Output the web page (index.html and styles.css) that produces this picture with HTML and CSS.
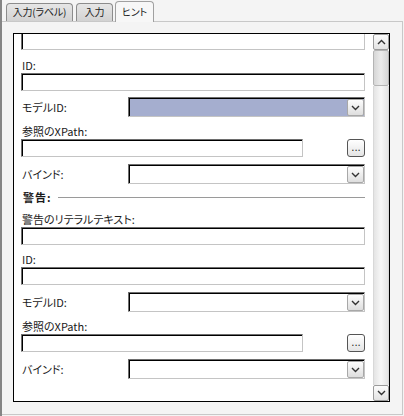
FILE: index.html
```html
<!DOCTYPE html>
<html lang="ja">
<head><meta charset="utf-8"><title>hint</title>
<link rel="stylesheet" href="styles.css">
</head>
<body>
<div class="win">
 <div class="tabs">
  <div class="tab t1">入力(ラベル)</div>
  <div class="tab t2">入力</div>
  <div class="tab t3 on">ヒント</div>
 </div>
 <div class="panel">
  <div class="box">
   <div class="content">
    <div class="txt cut"></div>

    <div class="field first"><div class="lbl">ID:</div><div class="txt"></div></div>
    <div class="row"><span class="lbl">モデルID:</span><div class="sel hi"><span class="drop"><svg width="9" height="6" viewBox="0 0 9 6"><polyline points="1,1 4.5,4.5 8,1"/></svg></span></div></div>
    <div class="field"><div class="lbl">参照のXPath:</div>
     <div class="pathrow"><div class="txt path"></div><button class="more">...</button></div></div>
    <div class="row"><span class="lbl">バインド:</span><div class="sel"><span class="drop"><svg width="9" height="6" viewBox="0 0 9 6"><polyline points="1,1 4.5,4.5 8,1"/></svg></span></div></div>

    <div class="heading"><b>警告:</b><span class="rule"></span></div>

    <div class="field lit"><div class="lbl">警告のリテラルテキスト:</div><div class="txt"></div></div>
    <div class="field"><div class="lbl">ID:</div><div class="txt"></div></div>
    <div class="row"><span class="lbl">モデルID:</span><div class="sel"><span class="drop"><svg width="9" height="6" viewBox="0 0 9 6"><polyline points="1,1 4.5,4.5 8,1"/></svg></span></div></div>
    <div class="field"><div class="lbl">参照のXPath:</div>
     <div class="pathrow"><div class="txt path"></div><button class="more">...</button></div></div>
    <div class="row"><span class="lbl">バインド:</span><div class="sel"><span class="drop"><svg width="9" height="6" viewBox="0 0 9 6"><polyline points="1,1 4.5,4.5 8,1"/></svg></span></div></div>
   </div>
   <div class="sb">
    <div class="sbtn"><svg width="9" height="6" viewBox="0 0 9 6"><polyline points="1,5 4.5,1.5 8,5"/></svg></div>
    <div class="thumb"></div>
    <div class="track"></div>
    <div class="sbtn"><svg width="9" height="6" viewBox="0 0 9 6"><polyline points="1,1 4.5,4.5 8,1"/></svg></div>
   </div>
  </div>
 </div>
</div>
</body>
</html>
```

FILE: styles.css
```css
html{font-family:"Noto Sans CJK JP","DejaVu Sans",sans-serif;font-size:11px;font-feature-settings:"palt"}
body{margin:0;padding:0;background:#f4f4f4;color:#1a1a1a;overflow:hidden}
svg polyline{fill:none;stroke:#333;stroke-width:1.4}

.win{height:416px;box-sizing:border-box;border-left:2px solid #858585;display:flex;flex-direction:column}

/* tabs */
.tabs{height:21px;display:flex;align-items:flex-end;padding-left:4px;gap:2px}
.tab{height:18px;box-sizing:border-box;padding:0;text-align:center;font-size:10px;line-height:16px;letter-spacing:-0.2px;border:1px solid #8c8c8c;border-bottom:none;border-radius:4px 4px 0 0;background:linear-gradient(#e6e6e6,#d2d2d2);color:#222;white-space:nowrap;overflow:hidden}
.t1{width:67px;margin-right:1px}
.t2{width:37px}
.t3{width:39px}
.tab.on{height:21px;margin-bottom:-1px;position:relative;z-index:2;background:#f7f7f7;border-color:#a0a0a0;line-height:19px}

/* panel */
.panel{flex:1;margin:0 1px 1px 0;border:1px solid #c8c8c8;border-left:none;padding:11px 0 0 11px}
.box{width:377px;height:369px;box-sizing:border-box;border:1px solid #000;background:#fff;display:flex;overflow:hidden}
.content{flex:1;padding:0 8px 0 7px;overflow:hidden}

/* controls */
.txt{height:18px;box-sizing:border-box;border:1px solid;border-color:#6e6e6e #c4c4c4 #c4c4c4 #6e6e6e;box-shadow:inset 1px 1px 0 #000;background:#fff}
.txt.cut{margin-top:-2px}
.lbl{display:block;height:16px;line-height:16px;padding-left:1px;white-space:nowrap}
.field{margin-top:6px}
.field.first{margin-top:7px}
.field.lit{margin-top:4px}
.row{margin-top:7px;display:flex;align-items:center}
.row:nth-child(3){margin-top:6px}
.row .lbl{width:106px}
.sel{flex:1;height:20px;box-sizing:border-box;border:1px solid;border-color:#6e6e6e #c4c4c4 #c4c4c4 #6e6e6e;box-shadow:inset 1px 1px 0 #000;background:#fff;display:flex;justify-content:flex-end;padding:1px 0 0 0}
.sel.hi{background:#a5aecf}
.drop{width:17px;height:17px;box-sizing:border-box;border:1px solid #a8a8a8;border-radius:2px;background:linear-gradient(#fdfdfd,#dedede);display:flex;align-items:center;justify-content:center}
.pathrow{display:flex;justify-content:space-between;align-items:center}
.txt.path{width:282px}
.more{width:18px;height:18px;box-sizing:border-box;padding:0;border:1px solid #555;border-radius:3px;background:linear-gradient(#fff,#e4e4e4);font:10px "DejaVu Sans",sans-serif;line-height:12px;color:#222}

.heading{margin-top:3px;height:20px;display:flex;align-items:center;gap:6px;padding-left:2px}
.heading b{font-weight:bold;letter-spacing:1px}
.rule{flex:1;height:1px;background:#9a9a9a}

/* scrollbar */
.sb{width:16px;display:flex;flex-direction:column}
.sbtn{height:16px;box-sizing:border-box;border:1px solid #9a9a9a;border-radius:2px;background:linear-gradient(#fcfcfc,#e2e2e2);display:flex;align-items:center;justify-content:center}
.thumb{height:36px;box-sizing:border-box;border:1px solid #b4b4b4;border-radius:2px;background:linear-gradient(to right,#d6d6d6,#ebebeb 50%,#d6d6d6)}
.track{flex:1;background:linear-gradient(to right,#e4e4e4,#f7f7f7 50%,#e4e4e4);border-left:1px solid #d8d8d8;border-right:1px solid #d8d8d8}
```
